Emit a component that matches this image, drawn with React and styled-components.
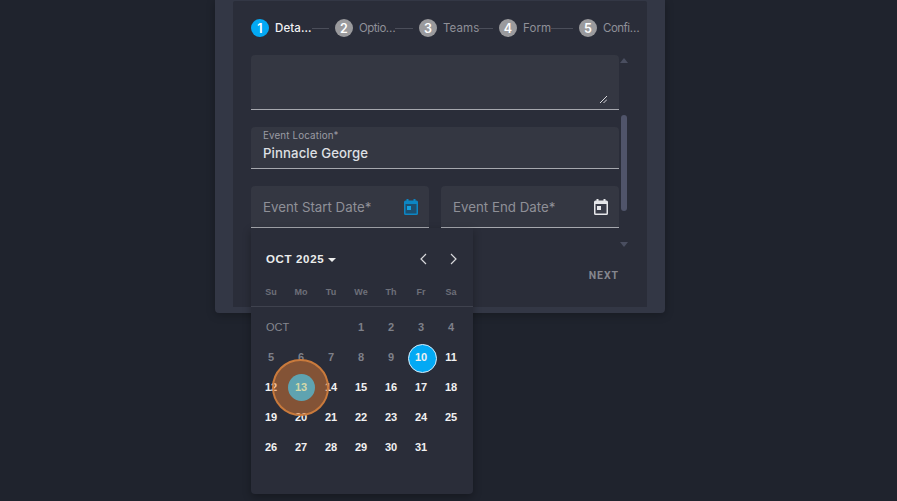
import React from 'react';
import styled, { createGlobalStyle } from 'styled-components';

const Global = createGlobalStyle`
  html, body { margin: 0; padding: 0; background: #1f232d; height: 100%; overflow: hidden; }
  * { box-sizing: border-box; }
`;
const Page = styled.div`
  width: 880px; height: 501px; display: flex; justify-content: center; align-items: flex-start;
  font-family: Inter, "Open Sans", sans-serif;
`;
const Modal = styled.div`
  position: relative; width: 450px; height: 313px; padding: 1px 18px 6px; background: #333745;
  border-radius: 0 0 4px 4px; box-shadow: 0 2px 8px rgba(0,0,0,.25);
`;
const Panel = styled.div`
  height: 100%; background: #2a2d39; padding: 17px 0 0 18px; display: flex; flex-direction: column; border-radius: 2px 2px 0 0;
`;
const Stepper = styled.div`
  display: flex; align-items: center; height: 20px; width: 388px; margin-bottom: 17px;
`;
const Step = styled.div`
  display: flex; align-items: center; flex: none; width: ${p => p.$w}px;
`;
const Circle = styled.span`
  width: 18px; height: 18px; border-radius: 50%; flex: none; display: flex; align-items: center; justify-content: center;
  background: ${p => p.$active ? '#03a9f4' : '#9a9a9d'}; color: #fff; font-size: 12.5px; font-weight: 600;
`;
const StepLabel = styled.span`
  margin-left: 6px; font-size: 11.5px; white-space: nowrap; flex: none;
  letter-spacing: ${p => p.$tight ? '-.5px' : '.1px'};
  color: ${p => p.$active ? '#f2f2f4' : '#8f9098'}; font-weight: ${p => p.$active ? 500 : 400};
`;
const Line = styled.span`
  flex: 1; height: 1px; margin-right: 6px; background: #4b4e5a;
`;
const Body = styled.div`
  display: flex; width: 378px; height: 197px; flex: none;
`;
const Form = styled.div`
  width: 368px; flex: none; display: flex; flex-direction: column; gap: 17px;
`;
const Field = styled.div`
  position: relative; height: ${p => p.$h}px; background: #343742; border-bottom: 1px solid #a6a8ae; flex: none;
  border-radius: 4px 4px 0 0; padding: 0 12px; display: flex; flex-direction: column;
`;
const Resize = styled.svg`
  position: absolute; right: 12px; bottom: 6px; width: 7px; height: 7px; color: #d8d8dc;
`;
const Small = styled.span`
  font-size: 9.8px; line-height: 12px; margin-top: 3px; color: #9b9ca4; letter-spacing: .15px;
`;
const Value = styled.span`
  font-size: 13.2px; line-height: 20px; margin-top: 1px; font-weight: 500; color: #dfe0e4; letter-spacing: .1px;
`;
const Row = styled.div`
  display: flex; gap: 12px;
`;
const DateField = styled(Field)`
  flex: 1; flex-direction: row; align-items: center; justify-content: space-between; padding: 0 11px 0 12px;
`;
const Placeholder = styled.span`
  font-size: 13.3px; color: #8f9098; letter-spacing: 0;
`;
const Track = styled.div`
  width: 10px; flex: none; display: flex; flex-direction: column; align-items: center;
`;
const Arrow = styled.span`
  width: 0; height: 0; border-left: 4.5px solid transparent; border-right: 4.5px solid transparent;
  ${p => p.$down ? 'border-top: 5px solid #4a4e60;' : 'border-bottom: 5px solid #4a4e60;'}
  margin: ${p => p.$down ? '0' : '3px 0 0'};
`;
const Thumb = styled.div`
  width: 6px; height: 96px; border-radius: 3px; background: #50546a; margin: 52px 0 31px;
`;
const Footer = styled.div`
  width: 368px; display: flex; justify-content: flex-end; margin-top: 17px;
`;
const Next = styled.span`
  font-family: Roboto, sans-serif; font-size: 10.5px; font-weight: 700; letter-spacing: .95px; color: #85868e;
`;
const Popover = styled.div`
  position: absolute; left: 36px; top: 228px; width: 222px; height: 266px; background: #2a2d39;
  border-radius: 0 0 4px 4px; box-shadow: 0 3px 8px rgba(0,0,0,.3); font-family: "Liberation Sans", Arial, sans-serif;
`;
const CalHead = styled.div`
  height: 56px; padding: 6px 5px 0 15px; display: flex; align-items: center; justify-content: space-between;
`;
const Month = styled.span`
  display: flex; align-items: center; gap: 4px; color: #eceded; font-size: 11.5px; font-weight: 700; letter-spacing: .65px;
`;
const Caret = styled.span`
  width: 0; height: 0; border-left: 4px solid transparent; border-right: 4px solid transparent; border-top: 4px solid #eceded; margin-top: 1px;
`;
const Navs = styled.div`
  display: flex;
`;
const Nav = styled.span`
  width: 30px; height: 16px; color: #d8d9dc; display: flex; align-items: center; justify-content: center;
`;
const Week = styled.div`
  display: grid; grid-template-columns: repeat(7, 30px); padding: 0 7px 0 5px; height: 16px; align-items: center;
`;
const WeekDay = styled.span`
  text-align: center; font-size: 9px; font-weight: 700; color: #6e7079;
`;
const Divider = styled.div`
  height: 1px; background: #3f424e; margin-top: 6px;
`;
const Grid = styled.div`
  display: grid; grid-template-columns: repeat(7, 30px); grid-auto-rows: 30px; padding: 5px 7px 0 5px;
`;
const MonthCell = styled.span`
  grid-column: span 3; padding-left: 10px; font-size: 11px; line-height: 30px; color: #85878e;
`;
const Day = styled.span`
  position: relative; display: flex; align-items: center; justify-content: center; font-size: 11px; font-weight: 700;
  color: ${p => p.$past ? '#7e8089' : '#f1f1f2'};
  &::before {
    content: ''; position: absolute; z-index: 1; left: 2px; top: 2px; width: 27px; height: 27px; border-radius: 50%;
    display: ${p => p.$sel || p.$today ? 'block' : 'none'};
    background: ${p => p.$today ? '#5fa3b0' : '#03a9f4'};
    border: ${p => p.$sel ? '1px solid #d8eefc' : '0'};
  }
`;
const DayText = styled.span`
  position: relative; z-index: ${p => p.$top ? 2 : 'auto'}; color: ${p => p.$today ? '#d4d8a8' : 'inherit'};
`;
const Ripple = styled.span`
  position: absolute; left: 56.5px; top: 359px; width: 57px; height: 57px; border-radius: 50%;
  background: rgba(240,130,50,.45); border: 2px solid #c97a3c;
`;

const steps = [
  ['1', 'Deta…', 84, true], ['2', 'Optio…', 84, false, false, true], ['3', 'Teams', 80], ['4', 'Form', 80], ['5', 'Confi…', 60, false, true, true],
];
const Cal = ({ color, fill, dot }) => (
  <svg width="14" height="16" viewBox="0 0 14 16" style={{ display: 'block' }}>
    <path d="M2.500 0h2v1.500h5V0h2v1.500h1A1.500 1.500 0 0 1 14 3v11.500a1.500 1.500 0 0 1-1.500 1.500h-11A1.500 1.500 0 0 1 0 14.500V3a1.500 1.500 0 0 1 1.500-1.500h1z" fill={color} />
    <rect x="1.500" y="5" width="11" height="9.500" fill={fill} />
    <rect x="3" y="7" width="4" height="4" fill={dot} />
  </svg>
);
const days = Array.from({ length: 31 }, (_, i) => i + 1);

export default function App() {
  return (
    <Page>
      <Global />
      <Modal>
        <Panel>
          <Stepper>
            {steps.map(([n, label, w, active, last, tight]) => (
              <Step key={n} $w={w}>
                <Circle $active={active}>{n}</Circle>
                <StepLabel $active={active} $tight={tight}>{label}</StepLabel>
                {!last && <Line />}
              </Step>
            ))}
          </Stepper>
          <Body>
            <Form>
              <Field $h={55}>
                <Resize viewBox="0 0 7 7"><path d="M0 7 7 0M3.500 7 7 3.500" stroke="currentColor" strokeWidth="1" /></Resize>
              </Field>
              <Field $h={42}>
                <Small>Event Location*</Small>
                <Value>Pinnacle George</Value>
              </Field>
              <Row>
                <DateField $h={42}><Placeholder>Event Start Date*</Placeholder><Cal color="#0c86c4" fill="#1d4f70" dot="#12a0e0" /></DateField>
                <DateField $h={42}><Placeholder>Event End Date*</Placeholder><Cal color="#e6e7ea" fill="#3a3d49" dot="#e6e7ea" /></DateField>
              </Row>
            </Form>
            <Track>
              <Arrow />
              <Thumb />
              <Arrow $down />
            </Track>
          </Body>
          <Footer><Next>NEXT</Next></Footer>
        </Panel>
        <Popover>
          <CalHead>
            <Month>OCT 2025<Caret /></Month>
            <Navs>
              <Nav><svg width="8" height="12" viewBox="0 0 8 12"><path d="M7 1 2 6l5 5" fill="none" stroke="currentColor" strokeWidth="1.2" /></svg></Nav>
              <Nav><svg width="8" height="12" viewBox="0 0 8 12"><path d="m2 1 5 5-5 5" fill="none" stroke="currentColor" strokeWidth="1.2" /></svg></Nav>
            </Navs>
          </CalHead>
          <Week>{['Su', 'Mo', 'Tu', 'We', 'Th', 'Fr', 'Sa'].map(d => <WeekDay key={d}>{d}</WeekDay>)}</Week>
          <Divider />
          <Grid>
            <MonthCell>OCT</MonthCell>
            {days.map(d => (
              <Day key={d} $past={d < 10} $sel={d === 10} $today={d === 13}>
                <DayText $top={d === 10 || d === 13} $today={d === 13}>{d}</DayText>
              </Day>
            ))}
          </Grid>
        </Popover>
        <Ripple />
      </Modal>
    </Page>
  );
}
